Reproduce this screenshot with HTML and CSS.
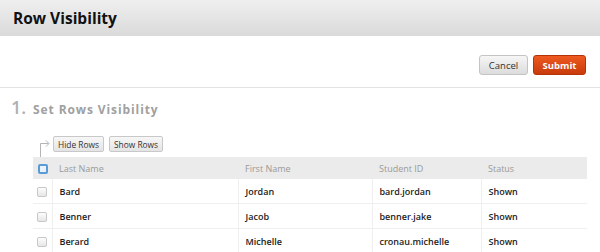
FILE: index.html
```html
<!DOCTYPE html>
<html lang="en">
<head>
    <meta charset="UTF-8">
    <title>Row Visibility</title>
    <link rel="stylesheet" href="styles.css">
</head>
<body>
    <div class="page-header">
        <h1>Row Visibility</h1>
    </div>

    <div class="actions">
        <button class="btn">Cancel</button>
        <button class="btn btn-submit">Submit</button>
    </div>

    <div class="step">
        <span class="step-num">1.</span>
        <span class="step-title">Set Rows Visibility</span>
    </div>

    <div class="toolbar">
        <svg class="connector" width="20" height="21" viewBox="0 0 20 21">
            <path d="M7.5 21 V7.5 H15.5" fill="none" stroke="#b5b5b5" stroke-width="1"/>
            <path d="M13 4.5 L16 7.5 L13 10.5" fill="none" stroke="#b5b5b5" stroke-width="1"/>
        </svg>
        <button class="btn btn-small">Hide Rows</button>
        <button class="btn btn-small">Show Rows</button>
    </div>

    <table class="grid">
        <thead>
            <tr>
                <th class="col-check"><span class="check check-all"></span></th>
                <th class="col-last">Last Name</th>
                <th class="col-first">First Name</th>
                <th class="col-id">Student ID</th>
                <th>Status</th>
            </tr>
        </thead>
        <tbody>
            <tr>
                <td class="col-check"><span class="check"></span></td>
                <td>Bard</td>
                <td>Jordan</td>
                <td>bard.jordan</td>
                <td>Shown</td>
            </tr>
            <tr>
                <td class="col-check"><span class="check"></span></td>
                <td>Benner</td>
                <td>Jacob</td>
                <td>benner.jake</td>
                <td>Shown</td>
            </tr>
            <tr>
                <td class="col-check"><span class="check"></span></td>
                <td>Berard</td>
                <td>Michelle</td>
                <td>cronau.michelle</td>
                <td>Shown</td>
            </tr>
        </tbody>
    </table>
</body>
</html>
```

FILE: styles.css
```css
body {
    margin: 0;
    font-family: 'Open Sans', 'DejaVu Sans', sans-serif;
    font-size: 9px;
    color: #222;
    background-color: #fff;
}
.page-header {
    height: 36px;
    padding-left: 13px;
    display: flex;
    align-items: center;
    background: linear-gradient(#efefef, #dadada);
}
h1 {
    margin: 0;
    font-size: 15.5px;
    font-weight: 700;
    color: #111;
}
.actions {
    display: flex;
    justify-content: flex-end;
    gap: 5px;
    padding: 19px 14px 12px;
    border-bottom: 1px solid #e2e2e2;
}
.btn {
    font-family: inherit;
    font-size: 9.5px;
    color: #333;
    height: 20px;
    padding: 0 5px;
    border: 1px solid #c4c4c4;
    border-radius: 3px;
    background: linear-gradient(#f6f6f6, #dcdcdc);
    cursor: pointer;
}
.actions .btn {
    width: 49px;
}
.actions .btn-submit {
    width: 53px;
    color: #fff;
    font-weight: 700;
    border-color: #b33408;
    background: linear-gradient(#ee5a1f, #c73b0c);
}
.step {
    display: flex;
    align-items: baseline;
    padding: 7px 0 0 11px;
    height: 31px;
}
.step-num {
    font-size: 18px;
    font-weight: 600;
    color: #b0b0b0;
    width: 22px;
}
.step-title {
    font-size: 12px;
    font-weight: 700;
    letter-spacing: 0.9px;
    color: #a0a0a0;
}
.toolbar {
    display: flex;
    align-items: flex-start;
    gap: 5px;
    padding: 10px 0 0 33px;
}
.connector {
    display: block;
    margin-right: -5px;
}
.btn-small {
    height: 16px;
    padding: 0 4px;
    font-size: 8.4px;
    border-radius: 2px;
    border-color: #c8c8c8;
    background: linear-gradient(#f7f7f7, #e4e4e4);
}
.grid {
    margin-left: 33px;
    width: 554px;
    border-collapse: collapse;
    table-layout: fixed;
}
.grid th {
    height: 22px;
    padding: 0 7px;
    text-align: left;
    font-weight: 400;
    font-size: 9px;
    color: #9a9a9a;
    background-color: #ebebeb;
}
.grid td {
    height: 24px;
    padding: 0 7px;
    font-weight: 600;
    font-size: 9px;
    color: #222;
    border-bottom: 1px solid #efefef;
    border-left: 1px solid #efefef;
}
.grid td:first-child {
    border-left: none;
}
.grid .col-check {
    width: 19px;
    padding: 0;
    text-align: center;
}
.grid .col-last {
    width: 172px;
}
.grid .col-first {
    width: 120px;
}
.grid .col-id {
    width: 95px;
}
.check {
    display: inline-block;
    width: 8px;
    height: 8px;
    border: 1px solid #c8c8c8;
    border-radius: 2px;
    background: linear-gradient(#fdfdfd, #e6e6e6);
    vertical-align: middle;
}
.check-all {
    border: 2px solid #5b9bd5;
    width: 6px;
    height: 6px;
    background: #e9f1fb;
}
```
